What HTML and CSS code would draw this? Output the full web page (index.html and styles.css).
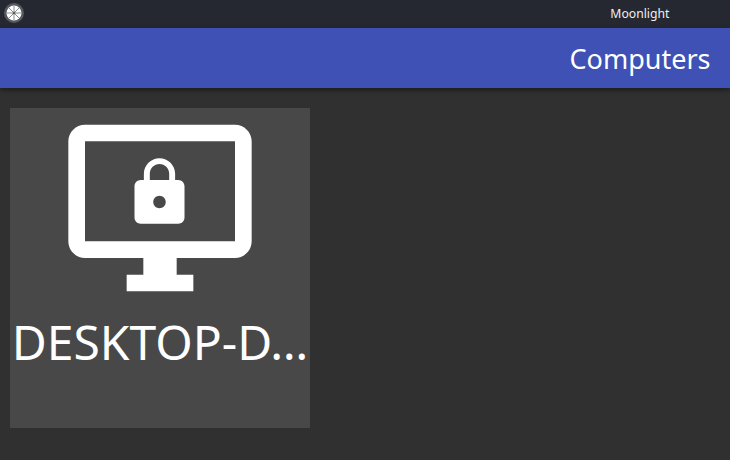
FILE: index.html
```html
<!DOCTYPE html>
<html lang="en">
<head>
<meta charset="utf-8">
<title>Moonlight</title>
<link rel="stylesheet" href="styles.css">
</head>
<body>
<div class="titlebar">
  <svg class="app-icon" viewBox="0 0 20 20" width="20" height="20">
    <circle cx="10" cy="10" r="10" fill="#565a60"/>
    <circle cx="10" cy="10" r="7.5" fill="#fff"/>
    <path d="M10 3v14M3 10h14M5 5l10 10M15 5L5 15" stroke="#888b8e" stroke-width="1"/>
    <circle cx="10" cy="10" r="1.3" fill="#565a60"/>
  </svg>
  <span class="window-title">Moonlight</span>
</div>
<header class="toolbar"><h1 class="heading">Computers</h1></header>
<main class="grid">
  <div class="computer">
    <svg class="monitor" viewBox="0 0 24 24" width="200" height="200">
      <path fill="#fff" d="M21 2H3c-1.1 0-2 .9-2 2v12c0 1.1.9 2 2 2h7v2H8v2h8v-2h-2v-2h7c1.1 0 2-.9 2-2V4c0-1.1-.9-2-2-2zm0 14H3V4h18v12z"/>
      <g transform="translate(7.44 5.64) scale(.375)"><path fill="#fff" d="M18 8h-1V6c0-2.76-2.24-5-5-5S7 3.24 7 6v2H6c-1.1 0-2 .9-2 2v10c0 1.1.9 2 2 2h12c1.1 0 2-.9 2-2V10c0-1.1-.9-2-2-2zm-6 9c-1.1 0-2-.9-2-2s.9-2 2-2 2 .9 2 2-.9 2-2 2zm3.1-9H8.9V6c0-1.71 1.39-3.1 3.1-3.1s3.1 1.39 3.1 3.1v2z"/></g>
    </svg>
    <span class="name">DESKTOP-D…</span>
  </div>
</main>
</body>
</html>
```
FILE: styles.css
```css
body {
  margin: 0;
  height: 460px;
  overflow: hidden;
  background: #303030;
  color: #fff;
  font-family: "Noto Sans", sans-serif;
}
.titlebar {
  height: 28px;
  box-sizing: border-box;
  padding: 0 60.6px 0 4px;
  display: flex;
  align-items: center;
  justify-content: space-between;
  background: #252831;
}
.app-icon { display: block; margin-bottom: 2px; }
.window-title { font-size: 12.2px; line-height: 16px; color: #f0f0f0; }
.toolbar {
  height: 60px;
  box-sizing: border-box;
  padding-right: 19.5px;
  display: flex;
  align-items: center;
  justify-content: flex-end;
  background: #3f51b5;
  box-shadow: 0 2px 5px rgba(0, 0, 0, 0.45);
}
.heading { margin: 0; font-size: 27px; font-weight: 400; }
.grid { padding: 20px 10px; display: flex; }
.computer {
  width: 300px;
  height: 320px;
  display: flex;
  flex-direction: column;
  align-items: center;
  background: #484848;
}
.monitor { display: block; }
.name {
  font-size: 48px;
  line-height: 67px;
  white-space: nowrap;
}
```
